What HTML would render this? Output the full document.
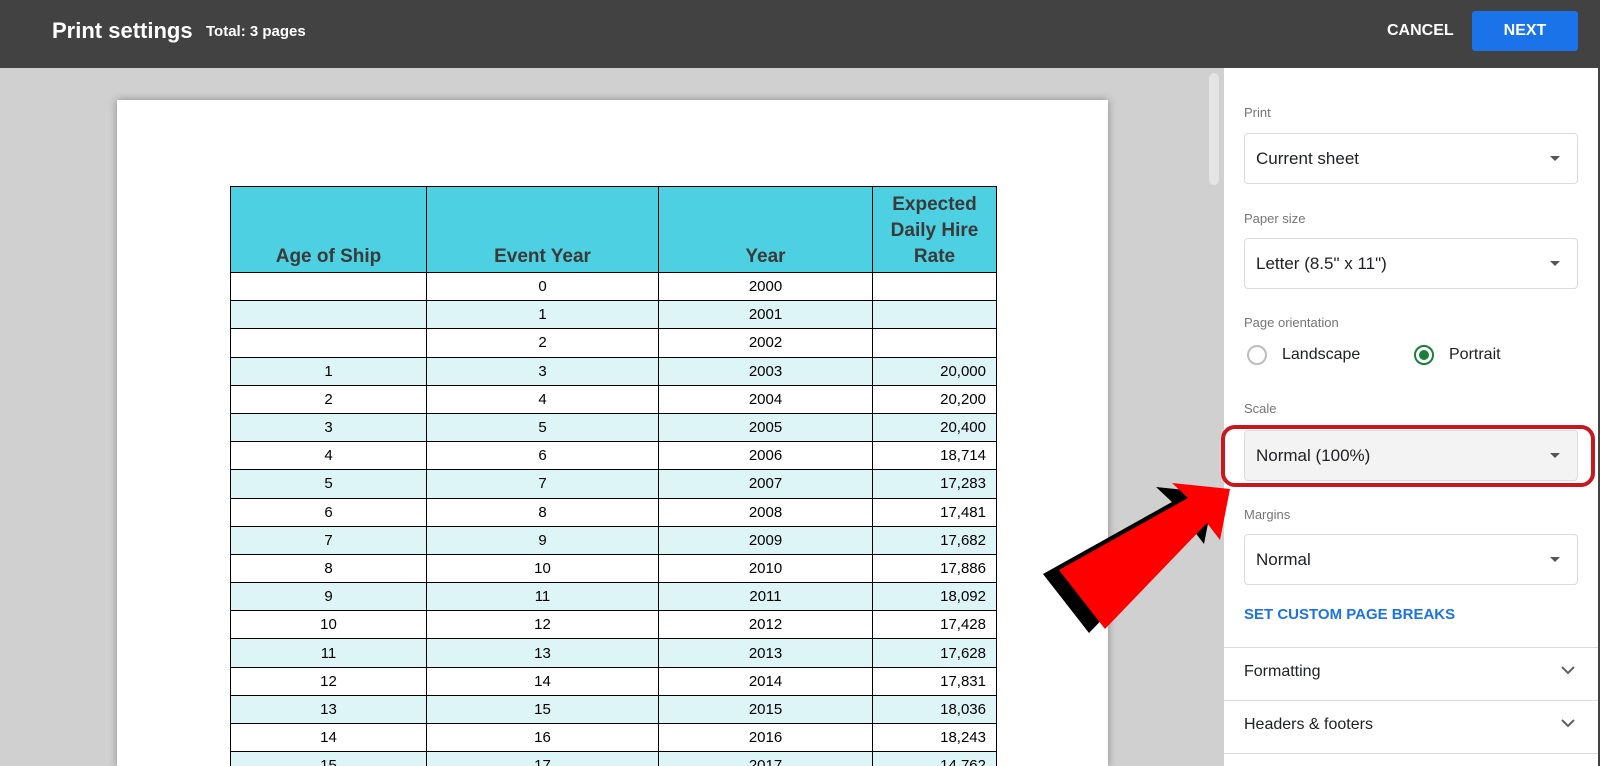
<!DOCTYPE html>
<html><head><meta charset="utf-8"><style>
*{margin:0;padding:0;box-sizing:border-box}
html,body{width:1600px;height:766px;overflow:hidden}
body{background:#d0d0d0;font-family:"Liberation Sans",sans-serif;position:relative}
.hdr{position:absolute;left:0;top:0;width:1600px;height:68px;background:#424242;color:#fff}
.abs{position:absolute}
.page{position:absolute;left:117px;top:100px;width:991px;height:666px;background:#fff;box-shadow:0 0 8px rgba(0,0,0,.35);overflow:hidden}
table{position:absolute;left:113px;top:86px;border-collapse:collapse;font-family:"Liberation Sans",sans-serif;font-size:15px;color:#000}
td{border:1.5px solid #000;height:28.2px;text-align:center;padding:0 10px}
th{border:1.5px solid #000;background:#4dd0e1;color:#3a3a3a;font-size:19px;font-weight:bold;vertical-align:bottom;height:86px;padding-bottom:2px;line-height:26px}
tr.a td{background:#def5f8}
td.r{text-align:right}
.side{position:absolute;left:1224px;top:68px;width:374px;height:698px;background:#fff}
.lbl{position:absolute;left:20px;font-size:13px;color:#757575}
.fld{position:absolute;left:20px;width:334px;height:51px;border:1px solid #dadce0;border-radius:4px;font-size:17px;color:#202124;padding:15px 0 0 11px}
.fld:after{content:"";position:absolute;right:17px;top:22px;border-left:5px solid transparent;border-right:5px solid transparent;border-top:5px solid #555}
.div{position:absolute;left:0;width:374px;height:1px;background:#dadce0}
.acc{position:absolute;left:20px;font-size:16px;color:#202124}
</style></head><body>
<div class="hdr">
<div class="abs" style="left:52px;top:18px;font-size:22px;font-weight:bold">Print settings</div>
<div class="abs" style="left:206px;top:23px;font-size:15px;font-weight:bold">Total: 3 pages</div>
<div class="abs" style="left:1387px;top:22px;font-size:16px;font-weight:bold">CANCEL</div>
<div class="abs" style="left:1472px;top:11px;width:106px;height:40px;background:#1a73e8;border-radius:3px;font-size:16px;font-weight:bold;text-align:center;line-height:40px">NEXT</div>
</div>
<div class="page">
<table>
<tr><th style="width:196px">Age of Ship</th><th style="width:232px">Event Year</th><th style="width:214px">Year</th><th style="width:124px">Expected<br>Daily Hire<br>Rate</th></tr>
<tr><td></td><td>0</td><td>2000</td><td class="r"></td></tr>
<tr class="a"><td></td><td>1</td><td>2001</td><td class="r"></td></tr>
<tr><td></td><td>2</td><td>2002</td><td class="r"></td></tr>
<tr class="a"><td>1</td><td>3</td><td>2003</td><td class="r">20,000</td></tr>
<tr><td>2</td><td>4</td><td>2004</td><td class="r">20,200</td></tr>
<tr class="a"><td>3</td><td>5</td><td>2005</td><td class="r">20,400</td></tr>
<tr><td>4</td><td>6</td><td>2006</td><td class="r">18,714</td></tr>
<tr class="a"><td>5</td><td>7</td><td>2007</td><td class="r">17,283</td></tr>
<tr><td>6</td><td>8</td><td>2008</td><td class="r">17,481</td></tr>
<tr class="a"><td>7</td><td>9</td><td>2009</td><td class="r">17,682</td></tr>
<tr><td>8</td><td>10</td><td>2010</td><td class="r">17,886</td></tr>
<tr class="a"><td>9</td><td>11</td><td>2011</td><td class="r">18,092</td></tr>
<tr><td>10</td><td>12</td><td>2012</td><td class="r">17,428</td></tr>
<tr class="a"><td>11</td><td>13</td><td>2013</td><td class="r">17,628</td></tr>
<tr><td>12</td><td>14</td><td>2014</td><td class="r">17,831</td></tr>
<tr class="a"><td>13</td><td>15</td><td>2015</td><td class="r">18,036</td></tr>
<tr><td>14</td><td>16</td><td>2016</td><td class="r">18,243</td></tr>
<tr class="a"><td>15</td><td>17</td><td>2017</td><td class="r">14,762</td></tr>
<tr><td>16</td><td>18</td><td>2018</td><td class="r">14,900</td></tr>
</table>
</div>
<div class="abs" style="left:1209px;top:73px;width:10px;height:112px;background:#e4e4e4;border-radius:5px"></div>
<div class="abs" style="left:1598px;top:68px;width:2px;height:698px;background:#424242"></div>
<div class="side">
<div class="lbl" style="top:37px">Print</div>
<div class="fld" style="top:65px">Current sheet</div>
<div class="lbl" style="top:143px">Paper size</div>
<div class="fld" style="top:170px">Letter (8.5" x 11")</div>
<div class="lbl" style="top:247px">Page orientation</div>
<div class="abs" style="left:23px;top:277px;width:20px;height:20px;border:2px solid #bdbdbd;border-radius:50%"></div>
<div class="abs" style="left:58px;top:278px;font-size:16px;color:#202124">Landscape</div>
<div class="abs" style="left:190px;top:277px;width:20px;height:20px;border:2px solid #188038;border-radius:50%"></div>
<div class="abs" style="left:195px;top:282px;width:10px;height:10px;background:#188038;border-radius:50%"></div>
<div class="abs" style="left:225px;top:278px;font-size:16px;color:#202124">Portrait</div>
<div class="lbl" style="top:333px">Scale</div>
<div class="fld" style="top:362px;background:#f3f3f3">Normal (100%)</div>
<div class="lbl" style="top:439px">Margins</div>
<div class="fld" style="top:466px">Normal</div>
<div class="abs" style="left:20px;top:538px;font-size:15px;font-weight:bold;color:#1a73e8">SET CUSTOM PAGE BREAKS</div>
<div class="div" style="top:579px"></div>
<div class="acc" style="top:595px">Formatting</div>
<div class="div" style="top:632px"></div>
<div class="acc" style="top:648px">Headers &amp; footers</div>
<div class="div" style="top:685px"></div>
<svg class="abs" style="left:336px;top:597px" width="16" height="70"><path d="M2 2l6 6 6-6M2 55l6 6 6-6" fill="none" stroke="#616161" stroke-width="2"/></svg>
</div>
<div class="abs" style="left:1221px;top:425px;width:374px;height:62px;border:4px solid #c8181e;border-radius:14px"></div>
<svg class="abs" style="left:0;top:0" width="1600" height="766">
<polygon points="1156,487 1214,493 1204,544 1191,527 1089,633 1043,574 1172,502" fill="#000"/>
<polygon points="1172,483 1230,489 1220,540 1207,523 1105,629 1059,570 1188,498" fill="#ff0000"/>
</svg>
</body></html>
